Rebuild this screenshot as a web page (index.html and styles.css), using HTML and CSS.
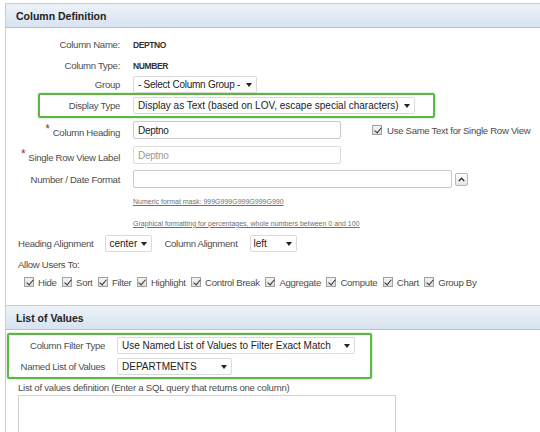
FILE: index.html
```html
<!DOCTYPE html>
<html lang="en">
<head>
    <meta charset="UTF-8">
    <meta name="viewport" content="width=device-width, initial-scale=1.0">
    <title>Column Attributes</title>
    <link rel="stylesheet" href="styles.css">
</head>
<body>
<div class="page">
    <section class="region">
        <h2 class="region-title">Column Definition</h2>
        <div class="region-body column-def">
            <div class="field field-static">
                <span class="field-label">Column Name:</span>
                <span class="field-value">DEPTNO</span>
            </div>
            <div class="field field-static">
                <span class="field-label">Column Type:</span>
                <span class="field-value">NUMBER</span>
            </div>
            <div class="field field-group">
                <label class="field-label" for="columnGroup">Group</label>
                <span class="select"><select id="columnGroup" class="select-group"><option>- Select Column Group -</option></select></span>
            </div>
            <div class="field marked marked-display">
                <label class="field-label" for="displayType">Display Type</label>
                <span class="select"><select id="displayType" class="select-display"><option>Display as Text (based on LOV, escape special characters)</option></select></span>
            </div>
            <div class="field field-heading">
                <label class="field-label" for="columnHeading"><span class="req">*</span>Column Heading</label>
                <input type="text" id="columnHeading" class="input-heading" value="Deptno">
                <label class="check-item same-text"><input type="checkbox" checked> Use Same Text for Single Row View</label>
            </div>
            <div class="field field-single">
                <label class="field-label" for="singleLabel"><span class="req">*</span>Single Row View Label</label>
                <input type="text" id="singleLabel" class="input-heading input-muted" value="Deptno">
            </div>
            <div class="field field-format">
                <label class="field-label" for="formatMask">Number / Date Format</label>
                <span class="input-group">
                    <input type="text" id="formatMask" class="input-format">
                    <button class="pick-btn" type="button">
                        <svg width="7" height="5" viewBox="0 0 7 5"><polyline points="0.8,4 3.5,1.3 6.2,4" fill="none" stroke="#333" stroke-width="1.4"/></svg>
                    </button>
                </span>
            </div>
            <div class="hint hint-first"><a href="#">Numeric format mask: 999G999G999G999G990</a></div>
            <div class="hint"><a href="#">Graphical formatting for percentages, whole numbers between 0 and 100</a></div>
            <div class="inline-fields">
                <label for="headingAlign">Heading Alignment</label>
                <span class="select"><select id="headingAlign" class="select-small"><option>center</option></select></span>
                <label for="columnAlign" class="second-label">Column Alignment</label>
                <span class="select"><select id="columnAlign" class="select-small"><option>left</option></select></span>
            </div>
            <div class="allow-title">Allow Users To:</div>
            <div class="check-row">
                <label class="check-item"><input type="checkbox" checked> Hide</label>
                <label class="check-item"><input type="checkbox" checked> Sort</label>
                <label class="check-item"><input type="checkbox" checked> Filter</label>
                <label class="check-item"><input type="checkbox" checked> Highlight</label>
                <label class="check-item"><input type="checkbox" checked> Control Break</label>
                <label class="check-item"><input type="checkbox" checked> Aggregate</label>
                <label class="check-item"><input type="checkbox" checked> Compute</label>
                <label class="check-item"><input type="checkbox" checked> Chart</label>
                <label class="check-item"><input type="checkbox" checked> Group By</label>
            </div>
        </div>
    </section>

    <section class="region">
        <h2 class="region-title">List of Values</h2>
        <div class="region-body lov">
            <div class="marked marked-lov">
                <div class="field lov-field">
                    <label class="field-label" for="filterType">Column Filter Type</label>
                    <span class="select"><select id="filterType" class="select-filter"><option>Use Named List of Values to Filter Exact Match</option></select></span>
                </div>
                <div class="field lov-field">
                    <label class="field-label" for="namedLov">Named List of Values</label>
                    <span class="select"><select id="namedLov" class="select-lov"><option>DEPARTMENTS</option></select></span>
                </div>
            </div>
            <label class="lov-caption" for="lovQuery">List of values definition (Enter a SQL query that returns one column)</label>
            <textarea id="lovQuery" class="lov-query"></textarea>
        </div>
    </section>
</div>
</body>
</html>
```

FILE: styles.css
```css
* {
    margin: 0;
    padding: 0;
    box-sizing: border-box;
}

html, body {
    height: 100%;
    overflow: hidden;
}

body {
    font-family: "Liberation Sans", Arial, sans-serif;
    font-size: 9.6px;
    letter-spacing: -0.3px;
    color: #4d4d4d;
    background: #fff;
}

.page {
    padding: 3px 0 0 5px;
}

.region {
    border-left: 1px solid #c9cdd2;
}

.region-title {
    height: 25px;
    padding-left: 10px;
    display: flex;
    align-items: center;
    font-size: 10.5px;
    font-weight: bold;
    letter-spacing: 0;
    color: #222;
    background: linear-gradient(#edf2f8, #d7e3f0);
    border-top: 1px solid #c4ccd6;
    border-bottom: 1px solid #b3c1d0;
}

/* form rows */
.column-def {
    padding: 6px 0 15px;
}

.field {
    display: flex;
    align-items: center;
    gap: 13px;
}

.field-label {
    width: 114px;
    flex-shrink: 0;
    text-align: right;
    white-space: nowrap;
}

.field-static {
    height: 21px;
}

.field-value {
    font-weight: bold;
    font-size: 8.5px;
    letter-spacing: -0.4px;
    color: #333;
}

.field-group {
    height: 17px;
}

.field-heading {
    margin-top: 3px;
    height: 18px;
}

.field-single {
    margin-top: 7px;
    height: 18px;
}

.field-format {
    margin-top: 6px;
    height: 18px;
}

.req {
    color: #a8293d;
    font-size: 12px;
    vertical-align: 3px;
    margin-right: 3px;
}

/* green outline around the edited settings */
.marked {
    border: 2px solid #5db544;
    border-radius: 2px;
    box-shadow: 0 0 2px rgba(70, 160, 50, 0.55);
}

.marked-display {
    margin-left: 32px;
    width: 397px;
    height: 25px;
}

.marked-display .field-label {
    width: 80px;
}

/* selects */
.select {
    position: relative;
    display: inline-block;
    flex-shrink: 0;
}

.select::after {
    content: "";
    position: absolute;
    right: 5px;
    top: 7px;
    border-left: 3px solid transparent;
    border-right: 3px solid transparent;
    border-top: 4px solid #222;
    pointer-events: none;
}

.select select {
    appearance: none;
    -webkit-appearance: none;
    display: block;
    height: 17px;
    padding: 0 10px 0 4px;
    border: 1px solid #dadada;
    border-radius: 2px;
    background: #fff;
    font-family: inherit;
    font-size: 10px;
    letter-spacing: 0;
    color: #222;
}

.select .select-group {
    width: 124px;
    letter-spacing: -0.25px;
}

.select-display { width: 282px; }
.select-small { width: 47px; }
.select-filter { width: 238px; }
.select-lov { width: 115px; }

.select .select-small {
    padding: 0 10px 0 3px;
}

/* text inputs */
input.input-heading,
input.input-format {
    flex-shrink: 0;
    height: 18px;
    padding: 0 4px;
    border: 1px solid #c9c9c9;
    border-radius: 2px;
    font-family: inherit;
    font-size: 10px;
    letter-spacing: -0.3px;
    color: #222;
    background: #fff;
}

.input-heading {
    width: 208px;
}

input.input-muted {
    color: #9a9a9a;
    border-color: #dcdcdc;
}

.input-group {
    display: flex;
    align-items: center;
    gap: 3px;
}

.input-format {
    width: 319px;
}

.pick-btn {
    width: 13px;
    height: 13px;
    display: flex;
    align-items: center;
    justify-content: center;
    border: 1px solid #b8b8b8;
    border-radius: 2px;
    background: linear-gradient(#fff, #e4e4e4);
}

/* checkboxes */
.check-item {
    display: flex;
    align-items: center;
    gap: 4px;
    white-space: nowrap;
}

.check-item input {
    appearance: none;
    -webkit-appearance: none;
    position: relative;
    flex-shrink: 0;
    width: 10px;
    height: 10px;
    border: 1px solid #a0a0a0;
    background: linear-gradient(#f4f4f4, #dedede);
}

.check-item input:checked::after {
    content: "";
    position: absolute;
    left: 2.5px;
    top: 0;
    width: 3px;
    height: 6px;
    border-right: 1.5px solid #333;
    border-bottom: 1.5px solid #333;
    transform: rotate(40deg);
}

.same-text {
    margin-left: 18px;
    gap: 5px;
}

/* format hints */
.hint {
    height: 22px;
    padding-left: 127px;
    display: flex;
    align-items: center;
}

.hint-first {
    margin-top: 2px;
}

.hint a {
    font-size: 7px;
    letter-spacing: 0;
    color: #707070;
}

.inline-fields {
    height: 18px;
    padding-left: 12px;
    display: flex;
    align-items: center;
    gap: 12px;
}

.allow-title {
    margin-top: 4px;
    height: 16px;
    padding-left: 12px;
    display: flex;
    align-items: center;
}

.check-row {
    margin-top: 2px;
    height: 16px;
    padding-left: 18px;
    display: flex;
    align-items: center;
    gap: 5.5px;
}

/* list of values */
.lov {
    padding-top: 3px;
}

.marked-lov {
    margin-left: 1px;
    width: 365px;
    height: 46px;
}

.lov-field {
    height: 21px;
    gap: 12px;
}

.lov-field .field-label {
    width: 96px;
}

.lov-caption {
    display: block;
    margin-top: 2px;
    height: 14px;
    line-height: 14px;
    padding-left: 12px;
    letter-spacing: -0.25px;
}

.lov-query {
    display: block;
    margin-left: 12px;
    width: 378px;
    height: 70px;
    border: 1px solid #d0d0d0;
    resize: none;
}
```
